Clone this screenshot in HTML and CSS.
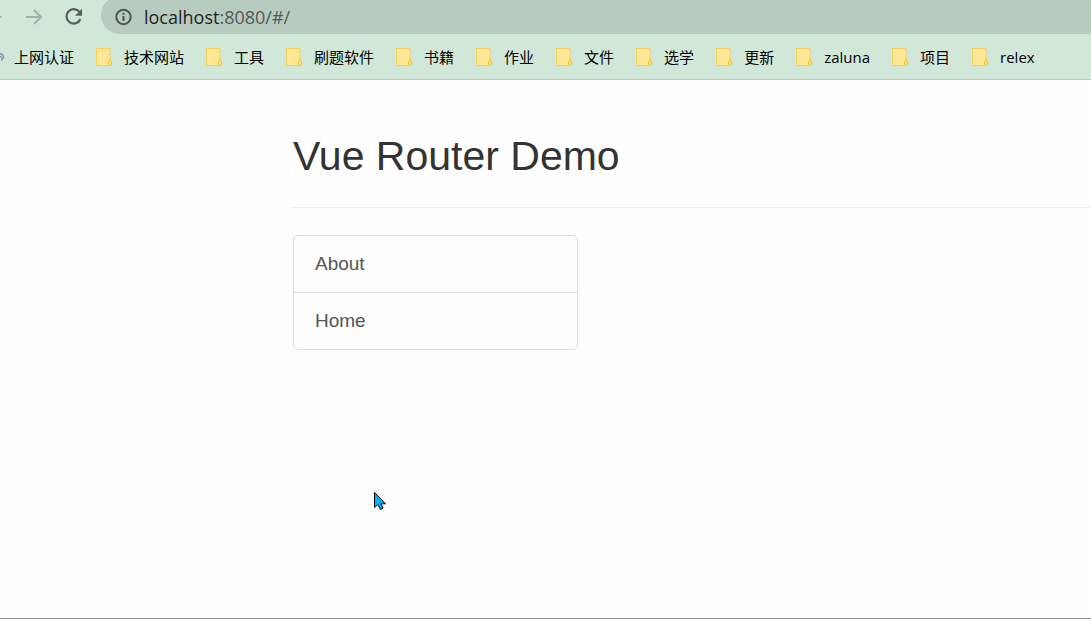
FILE: index.html
```
<!DOCTYPE html>
<html lang="zh-CN">
<head>
<meta charset="utf-8">
<title>Vue Router Demo</title>
<link rel="stylesheet" href="styles.css">
</head>
<body>
<svg class="defs" aria-hidden="true">
  <symbol id="folder" viewBox="0 0 16 18">
    <path d="M.500.500h13.500v17H.500z" fill="#ffe694" stroke="#f3d060"/>
    <rect x="12.500" y="12" width="3" height="5.500" rx="1.500" fill="#ffe27a" stroke="#f2c832"/>
  </symbol>
</svg>
<header class="browser">
  <div class="toolbar">
    <button class="tool back" aria-label="后退"><svg width="16" height="16" viewBox="0 0 16 16"><path d="M15.500 8H1M8 1L1 8l7 7" fill="none" stroke="#9fafa5" stroke-width="2"/></svg></button>
    <button class="tool" aria-label="前进"><svg width="18" height="16" viewBox="0 0 18 16"><path d="M1 8h15M9 1l7 7-7 7" fill="none" stroke="#a1b0a7" stroke-width="2"/></svg></button>
    <button class="tool reload" aria-label="刷新"><svg width="18" height="18" viewBox="0 0 18 18"><path d="M14.500 4A7.200 7.200 0 1 0 15.400 11" fill="none" stroke="#58605c" stroke-width="2.200"/><path d="M17 .800v7h-7z" fill="#58605c"/></svg></button>
    <div class="address">
      <svg width="18" height="18" viewBox="0 0 18 18"><circle cx="9.500" cy="9" r="7.200" fill="none" stroke="#4c5550" stroke-width="2"/><path d="M9.500 8v5M9.500 4.800v2" stroke="#4c5550" stroke-width="2"/></svg>
      <div class="url" role="textbox" contenteditable="true" spellcheck="false" aria-label="地址">localhost<span class="path">:8080/#/</span></div>
    </div>
  </div>
  <nav class="bookmarks">
    <a href="#"><svg class="site" width="5" height="12" viewBox="0 0 5 12"><path d="M0 2.500q4 1 3.500 4.500L1 9.500M0 5l2 2" fill="none" stroke="#8992bd" stroke-width="1.500"/></svg>上网认证</a>
    <a href="#"><svg class="folder"><use href="#folder"/></svg>技术网站</a>
    <a href="#"><svg class="folder"><use href="#folder"/></svg>工具</a>
    <a href="#"><svg class="folder"><use href="#folder"/></svg>刷题软件</a>
    <a href="#"><svg class="folder"><use href="#folder"/></svg>书籍</a>
    <a href="#"><svg class="folder"><use href="#folder"/></svg>作业</a>
    <a href="#"><svg class="folder"><use href="#folder"/></svg>文件</a>
    <a href="#"><svg class="folder"><use href="#folder"/></svg>选学</a>
    <a href="#"><svg class="folder"><use href="#folder"/></svg>更新</a>
    <a href="#"><svg class="folder"><use href="#folder"/></svg>zaluna</a>
    <a href="#"><svg class="folder"><use href="#folder"/></svg>项目</a>
    <a href="#"><svg class="folder"><use href="#folder"/></svg>relex</a>
  </nav>
</header>
<main class="page">
  <div class="page-header"><h1>Vue Router Demo</h1></div>
  <nav class="list-group">
    <a class="list-item" href="#/about">About</a>
    <a class="list-item" href="#/home">Home</a>
  </nav>
</main>
<svg class="cursor" width="13" height="20" viewBox="0 0 13 20" aria-hidden="true"><path d="M.500 1.500v15l3.500-3 2.300 5 2.800-1.300-2.200-4.400h4.600z" fill="#00b4ff" stroke="#000"/></svg>
</body>
</html>
```
FILE: styles.css
```
* { box-sizing: border-box; }

body {
  display: flex;
  flex-direction: column;
  min-height: 100vh;
  margin: 0;
  background: #fefefe;
  font-family: "Liberation Sans", Arial, sans-serif;
}

a { color: inherit; text-decoration: none; }
svg { flex: none; }

.defs { position: absolute; width: 0; height: 0; }

.browser {
  background: #d1e8d9;
  border-bottom: 1px solid #b5cabd;
  overflow: hidden;
}

.toolbar {
  display: flex;
  align-items: center;
  height: 34px;
}

.tool {
  display: flex;
  flex: none;
  justify-content: flex-start;
  width: 40px;
  padding: 0;
  border: 0;
  background: none;
}

.back { width: 25px; margin-left: -14px; margin-right: 14px; }
.reload { width: 36px; }

.address {
  display: flex;
  flex: 1;
  align-items: center;
  gap: 12px;
  height: 38px;
  margin-top: -4px;
  padding: 3px 13px 0;
  border-radius: 20px 0 0 20px;
  background: #b7cbbf;
}

.url {
  color: #1f2422;
  font: 18px/24px "Open Sans", "Noto Sans", sans-serif;
  outline: none;
}

.path { color: #515a55; }

.bookmarks {
  display: flex;
  align-items: center;
  gap: 22px;
  height: 45px;
  color: #000;
  font: 15px/22px "Open Sans", "Noto Sans CJK SC", sans-serif;
  white-space: nowrap;
}

.bookmarks a { display: flex; align-items: center; gap: 12px; }
.folder { width: 16px; height: 18px; }
.site { margin-right: -3px; }

.page {
  flex: 1;
  padding: 53px 0 0 293px;
  border-bottom: 1px solid #8f8f8f;
}

.page-header {
  padding-bottom: 27px;
  border-bottom: 1px solid #ececec;
}

h1 {
  margin: 0;
  color: #333;
  font-size: 41px;
  font-weight: 400;
  line-height: 47px;
}

.list-group {
  width: 285px;
  margin-top: 27px;
  border: 1px solid #ddd;
  border-radius: 5px;
}

.list-item {
  display: block;
  padding: 15px 21px;
  color: #555;
  font-size: 19px;
  line-height: 26px;
}

.list-item + .list-item { border-top: 1px solid #ddd; }

.cursor { position: absolute; left: 374px; top: 491px; }
```
